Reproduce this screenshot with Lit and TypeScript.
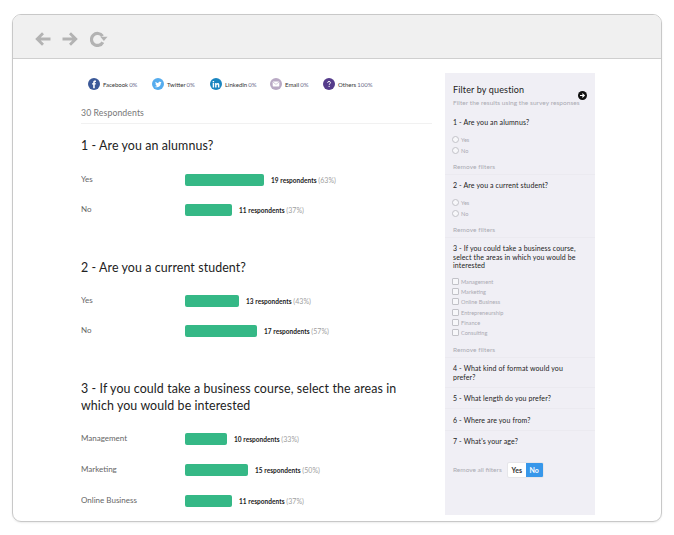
import { LitElement, html, css, svg } from "lit";
import { customElement } from "lit/decorators.js";

interface Row { label: string; n: number; pct: number; width: number }
interface Q { title: string; rows: Row[]; cls: string }

const questions: Q[] = [
  { title: "1 - Are you an alumnus?", cls: "q1", rows: [
    { label: "Yes", n: 19, pct: 63, width: 79 },
    { label: "No", n: 11, pct: 37, width: 47 },
  ]},
  { title: "2 - Are you a current student?", cls: "q2", rows: [
    { label: "Yes", n: 13, pct: 43, width: 54 },
    { label: "No", n: 17, pct: 57, width: 72 },
  ]},
  { title: "3 - If you could take a business course, select the areas in which you would be interested", cls: "q3", rows: [
    { label: "Management", n: 10, pct: 33, width: 42 },
    { label: "Marketing", n: 15, pct: 50, width: 63 },
    { label: "Online Business", n: 11, pct: 37, width: 47 },
  ]},
];

const shares = [
  { name: "Facebook", v: "0%", w: 64, c: "#3b5998", g: svg`<path d="M6.900 13.600V8.800H5.400V6.900h1.500V5.700c0-1.600.9-2.500 2.400-2.500h1.300v2H9.800c-.6 0-.8.3-.8.8v.9h1.600l-.3 1.900H9v4.800z" fill="#fff"/>` },
  { name: "Twitter", v: "0%", w: 58, c: "#55acee", g: svg`<path d="M3.500 11.600c2.800 1.700 8.300.6 8.300-5 .4-.3.7-.6 1-1-.4.2-.7.3-1.100.3.4-.2.7-.6.8-1-.4.200-.8.400-1.200.500-1.100-1.100-3.200-.2-2.800 1.600-1.500 0-2.800-.8-3.700-1.900-.5.9-.2 2 .6 2.600-.3 0-.6-.1-.8-.2 0 .9.7 1.700 1.500 1.900-.3.100-.5.100-.8 0 .2.8 1 1.300 1.800 1.400-.7.500-1.600.8-2.600.8z" fill="#fff"/>` },
  { name: "LinkedIn", v: "0%", w: 60, c: "#1a85c0", g: svg`<path d="M3.600 6.800h1.900v5.700H3.600zM3.600 4h1.900v1.700H3.600zM6.800 6.800h1.800v.8c.9-1.400 3.900-1.300 3.900 1.400v3.500h-1.900V9.600c0-1.500-1.900-1.400-1.900 0v2.900H6.800z" fill="#fff"/>` },
  { name: "Email", v: "0%", w: 53, c: "#b9a9c4", g: svg`<rect x="3.600" y="4.800" width="8.800" height="6.400" rx=".8" fill="#fff"/><path d="M3.900 5.400 8 8.500l4.100-3.100" fill="none" stroke="#b9a9c4" stroke-width=".8"/>` },
  { name: "Others", v: "100%", w: 60, c: "#553c8b", g: svg`<path d="M6.100 6.300c.1-1.100.9-1.700 2-1.700s1.900.7 1.900 1.600c0 1.400-1.800 1.400-1.800 2.900" fill="none" stroke="#fff" stroke-width="1.300"/><circle cx="8.200" cy="11.100" r=".9" fill="#fff"/>` },
];

const radio = (t: string) => html`<div class="opt"><span class="radio"></span>${t}</div>`;
const check = (t: string) => html`<div class="opt chk"><span class="box"></span>${t}</div>`;

@customElement("app-root")
export class AppRoot extends LitElement {
  static styles = css`
    :host {
      display: block;
      width: 674px;
      height: 535px;
      box-sizing: border-box;
      padding: 14px 12px 13px;
      overflow: hidden;
      background: #fff;
      font-family: Lato, "Noto Sans", sans-serif;
      color: #222;
    }
    .window {
      height: 100%;
      box-sizing: border-box;
      border: 1px solid #c8c8c8;
      border-radius: 9px;
      box-shadow: 0 1px 2px rgba(0,0,0,.08);
      overflow: hidden;
      display: flex;
      flex-direction: column;
    }
    .chrome {
      height: 44px;
      flex: none;
      box-sizing: border-box;
      background: #f0f0f0;
      border-bottom: 1px solid #cfcfcf;
      display: flex;
      align-items: center;
      gap: 11px;
      padding: 4px 0 0 22px;
    }
    .chrome svg { display: block; }
    .chrome .reload { margin-left: 1px; }
    .page {
      flex: 1;
      min-height: 0;
      display: flex;
      padding: 14px 66px 6px 68px;
      gap: 13px;
    }
    .main { width: 351px; flex: none; overflow: hidden; }
    .shares { display: flex; height: 16px; margin-top: 3px; padding-left: 7px; align-items: center; font-size: 6px; }
    .share { display: flex; align-items: center; gap: 3px; color: #333; white-space: nowrap; flex: none; box-sizing: border-box; }
    .share b { font-weight: 400; color: #6a6a8a; margin-left: 1px; }
    .share svg { display: block; flex: none; }
    .share .t { display: block; }
    .resp {
      margin-top: 13px;
      padding-bottom: 3px;
      height: 15px;
      font-size: 8.700px;
      line-height: 15px;
      letter-spacing: .1px;
      color: #777;
      border-bottom: 1px solid #f1f1f1;
    }
    h2 { font-weight: 400; font-size: 12.400px; line-height: 17px; letter-spacing: .1px; color: #222; margin: 0; }
    .q3 h2 { max-width: 340px; }
    .q1 { margin-top: 12.500px; }
    .q2 { margin-top: 33px; }
    .q3 { margin-top: 33px; }
    .rows { margin-top: 11px; display: flex; flex-direction: column; }
    .q2 .rows { margin-top: 9.500px; }
    .q3 .rows { margin-top: 10.500px; }
    .row { display: flex; align-items: center; height: 30.670px; font-size: 8px; color: #666; }
    .row .lab { width: 104px; flex: none; position: relative; top: -1px; }
    .bar { height: 12px; border-radius: 2px; background: #35b886; flex: none; }
    .count { margin-left: 7px; font-size: 6.500px; font-weight: 700; color: #222; white-space: nowrap; letter-spacing: .05px; }
    .count span { font-weight: 400; font-size: 7px; color: #a0a0a0; }
    .side {
      width: 150px;
      flex: none;
      background: #f0eff5;
      padding-top: 11px;
      box-sizing: border-box;
      position: relative;
    }
    .arrow { position: absolute; left: 133px; top: 18px; display: block; }
    .side-h { padding: 0 8px; font-size: 9px; line-height: 12px; font-weight: 400; color: #222; letter-spacing: .15px; }
    .side-sub { padding: 0 8px; margin-top: 2px; font-size: 6.500px; line-height: 10px; color: #aaaab2; white-space: nowrap; letter-spacing: .05px; }
    .block { padding: 0 8px; border-bottom: 1px solid #ebeaf0; }
    .qt { font-size: 7px; line-height: 8.500px; color: #222; font-weight: 400; letter-spacing: .12px; }
    .opts { margin-top: 8px; }
    .b3 .opts { margin-top: 7px; }
    .opt { display: flex; align-items: center; height: 10.500px; font-size: 5.600px; color: #aaaab2; gap: 2px; }
    .chk { height: 10.200px; }
    .radio { width: 5px; height: 5px; margin-left: -1px; border: 1px solid #c2c2c8; border-radius: 50%; background: #f7f7fa; flex: none; }
    .box { width: 5px; height: 5px; margin-left: -1px; border: 1px solid #c2c2c8; border-radius: 1px; background: #f7f7fa; flex: none; }
    .rm { margin-top: 6px; font-size: 6.500px; line-height: 9px; color: #aaaab2; letter-spacing: .1px; }
    .b3 .rm { margin-top: 7px; }
    .b1 { margin-top: 10px; height: 56px; }
    .b2 { padding-top: 6px; height: 56px; }
    .b3 { padding-top: 6px; height: 113px; }
    .b4 { padding-top: 6px; height: 23px; }
    .b5 { padding-top: 6px; height: 14px; }
    .b6 { padding-top: 6.500px; height: 14.500px; }
    .b7 { padding: 6px 8px 0; border: none; }
    .foot { margin-top: 16px; display: flex; align-items: center; font-size: 6.500px; color: #aaaab2; }
    .toggle {
      margin-left: 5px;
      display: flex;
      height: 16px;
      width: 37px;
      box-sizing: border-box;
      background: #fff;
      border: 1px solid #e6e6ea;
      border-radius: 2px;
      font-size: 7px;
      font-weight: 700;
      line-height: 14px;
      text-align: center;
    }
    .toggle span { flex: 1; color: #333; }
    .toggle .on { background: #3797ea; color: #fff; border-radius: 0 1px 1px 0; flex: none; width: 17px; }
  `;

  render() {
    return html`<div class="window">
      <div class="chrome">
        <svg width="16" height="14" viewBox="0 0 16 14" fill="none" stroke="#b3b3b3" stroke-width="2.800"><path d="M15.500 7H3M8 1.200 2.200 7 8 12.800"/></svg>
        <svg width="16" height="14" viewBox="0 0 16 14" fill="none" stroke="#b3b3b3" stroke-width="2.800"><path d="M.5 7H13M8 1.200 13.800 7 8 12.800"/></svg>
        <svg class="reload" width="18" height="16" viewBox="0 0 18 16"><path d="M12.500 5.200A6 6 0 1 0 12.800 11.200" fill="none" stroke="#b3b3b3" stroke-width="3.200"/><path d="M10.300 5.800h7.200l-3.600 4.200z" fill="#b3b3b3"/></svg>
      </div>
      <div class="page">
        <div class="main">
          <div class="shares">
            ${shares.map(s => html`<div class="share" style="width:${s.w}px">
              <svg width="12" height="12" viewBox="0 0 16 16"><circle cx="8" cy="8" r="8" fill="${s.c}"/>${s.g}</svg>
              <span class="t">${s.name}<b>${s.v}</b></span>
            </div>`)}
          </div>
          <div class="resp">30 Respondents</div>
          ${questions.map(q => html`<div class="${q.cls}">
            <h2>${q.title}</h2>
            <div class="rows">
              ${q.rows.map(r => html`<div class="row">
                <div class="lab">${r.label}</div>
                <div class="bar" style="width:${r.width}px"></div>
                <div class="count">${r.n} respondents <span>(${r.pct}%)</span></div>
              </div>`)}
            </div>
          </div>`)}
        </div>
        <div class="side">
          <svg class="arrow" width="9" height="9" viewBox="0 0 10 10"><circle cx="5" cy="5" r="5" fill="#111"/><path d="M2.200 5h4.500M4.800 2.800 7 5 4.800 7.200" fill="none" stroke="#fff" stroke-width="1.200"/></svg>
          <div class="side-h">Filter by question</div>
          <div class="side-sub">Filter the results using the survey responses</div>
          <div class="block b1">
            <div class="qt">1 - Are you an alumnus?</div>
            <div class="opts">${radio("Yes")}${radio("No")}</div>
            <div class="rm">Remove filters</div>
          </div>
          <div class="block b2">
            <div class="qt">2 - Are you a current student?</div>
            <div class="opts">${radio("Yes")}${radio("No")}</div>
            <div class="rm">Remove filters</div>
          </div>
          <div class="block b3">
            <div class="qt">3 - If you could take a business course, select the areas in which you would be interested</div>
            <div class="opts">${["Management","Marketing","Online Business","Entrepreneurship","Finance","Consulting"].map(check)}</div>
            <div class="rm">Remove filters</div>
          </div>
          <div class="block b4"><div class="qt">4 - What kind of format would you prefer?</div></div>
          <div class="block b5"><div class="qt">5 - What length do you prefer?</div></div>
          <div class="block b6"><div class="qt">6 - Where are you from?</div></div>
          <div class="block b7">
            <div class="qt">7 - What's your age?</div>
            <div class="foot">Remove all filters
              <div class="toggle"><span>Yes</span><span class="on">No</span></div>
            </div>
          </div>
        </div>
      </div>
    </div>`;
  }
}
